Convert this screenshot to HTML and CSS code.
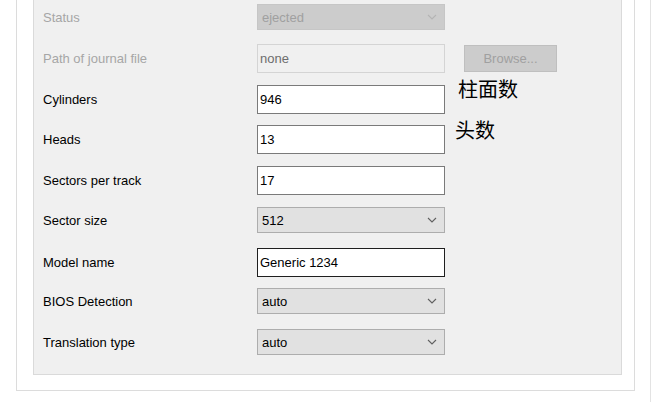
FILE: index.html
```html
<!DOCTYPE html>
<html lang="en">
<head>
<meta charset="utf-8">
<title>Disk properties</title>
<link rel="stylesheet" href="styles.css">
</head>
<body>
<div class="page">
  <div class="frame">
    <div class="panel">
      <div class="row first">
        <span class="label disabled">Status</span>
        <div class="combo off"><span class="val">ejected</span><svg class="chev" viewBox="0 0 10 6" width="10" height="6"><path d="M1 1 L5 5 L9 1" fill="none" stroke="currentColor" stroke-width="1.1"/></svg></div>
      </div>
      <div class="row gap-l">
        <span class="label disabled">Path of journal file</span>
        <div class="textbox off">none</div>
        <div class="button off">Browse...</div>
      </div>
      <div class="row">
        <span class="label">Cylinders</span>
        <div class="textbox">946</div>
      </div>
      <div class="row gap-s">
        <span class="label">Heads</span>
        <div class="textbox">13</div>
      </div>
      <div class="row">
        <span class="label">Sectors per track</span>
        <div class="textbox">17</div>
      </div>
      <div class="row">
        <span class="label">Sector size</span>
        <div class="combo"><span class="val">512</span><svg class="chev" viewBox="0 0 10 6" width="10" height="6"><path d="M1 1 L5 5 L9 1" fill="none" stroke="currentColor" stroke-width="1.1"/></svg></div>
      </div>
      <div class="row gap-xl">
        <span class="label">Model name</span>
        <div class="textbox focus">Generic 1234</div>
      </div>
      <div class="row gap-s">
        <span class="label">BIOS Detection</span>
        <div class="combo"><span class="val">auto</span><svg class="chev" viewBox="0 0 10 6" width="10" height="6"><path d="M1 1 L5 5 L9 1" fill="none" stroke="currentColor" stroke-width="1.1"/></svg></div>
      </div>
      <div class="row gap-xl">
        <span class="label">Translation type</span>
        <div class="combo"><span class="val">auto</span><svg class="chev" viewBox="0 0 10 6" width="10" height="6"><path d="M1 1 L5 5 L9 1" fill="none" stroke="currentColor" stroke-width="1.1"/></svg></div>
      </div>
      <span class="note note-cyl">柱面数</span>
      <span class="note note-heads">头数</span>
    </div>
  </div>
  <div class="edge"></div>
</div>
</body>
</html>
```
FILE: styles.css
```css
html, body {
  margin: 0;
  padding: 0;
  background: #ffffff;
}
body {
  width: 654px;
  height: 402px;
  overflow: hidden;
  font-family: "Liberation Sans", Arial, sans-serif;
  font-size: 13px;
  color: #000000;
}
.page {
  display: flex;
  align-items: flex-start;
  height: 402px;
}
.frame {
  flex: none;
  margin-left: 16px;
  width: 589px;
  border: 1px solid #dcdcdc;
  border-top: none;
  padding: 0 12px 15px 16px;
}
.edge {
  flex: none;
  width: 15px;
  height: 402px;
  border-right: 1px solid #e3e3e3;
}
.panel {
  position: relative;
  background: #f0f0f0;
  border: 1px solid #dadada;
  border-top: none;
  padding: 4px 0 19px 9px;
  display: flex;
  flex-direction: column;
}
.row {
  display: grid;
  grid-template-columns: 214px 188px auto;
  align-items: center;
  margin-top: 12px;
}
.row.first { margin-top: 0; }
.row.gap-s { margin-top: 11px; }
.row.gap-l { margin-top: 14px; }
.row.gap-xl { margin-top: 15px; }
.label {
  color: #000000;
  white-space: nowrap;
}
.label.disabled {
  color: #a6a6a6;
}
.textbox {
  box-sizing: border-box;
  height: 29px;
  border: 1px solid #7a7a7a;
  background: #ffffff;
  padding: 0 2px;
  line-height: 27px;
  white-space: nowrap;
}
.textbox.off {
  border-color: #d4d4d4;
  background: #f0f0f0;
  color: #6d6d6d;
}
.textbox.focus {
  border-color: #1f1f1f;
}
.combo {
  box-sizing: border-box;
  height: 26px;
  border: 1px solid #adadad;
  background: #e1e1e1;
  padding: 0 7px 0 4px;
  display: flex;
  align-items: center;
  justify-content: space-between;
  color: #000000;
}
.combo .chev {
  color: #606060;
}
.combo.off {
  background: #cccccc;
  border-color: #c6c6c6;
  color: #a0a0a0;
}
.combo.off .chev {
  color: #b4b4b4;
}
.button {
  box-sizing: border-box;
  margin-left: 19px;
  width: 93px;
  height: 27px;
  border: 1px solid #bfbfbf;
  background: #cccccc;
  color: #a0a0a0;
  display: flex;
  align-items: center;
  justify-content: center;
}
.note {
  position: absolute;
  font-family: "Noto Sans CJK SC", sans-serif;
  font-size: 20px;
  line-height: 20px;
  color: #000000;
}
.note-cyl {
  left: 424px;
  top: 79px;
}
.note-heads {
  left: 421px;
  top: 120px;
}
```
